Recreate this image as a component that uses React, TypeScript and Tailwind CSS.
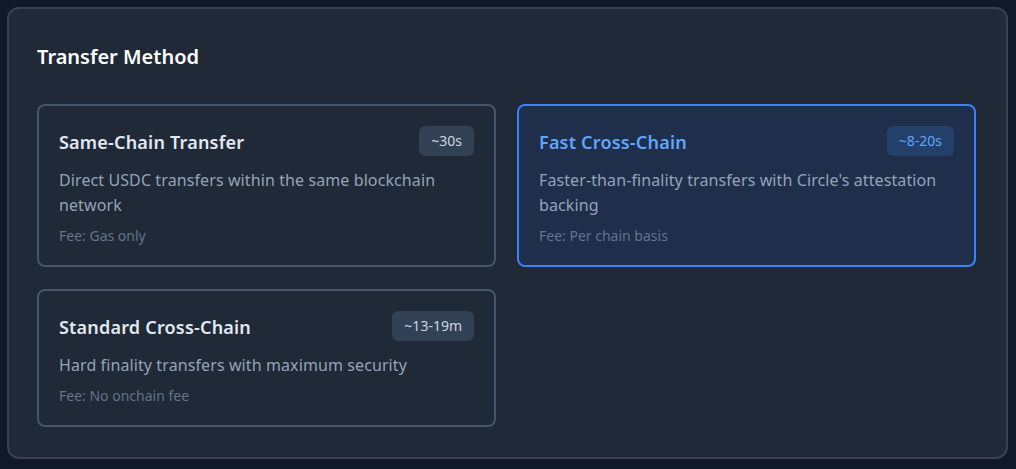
import React from "react";

type Method = {
  title: string;
  time: string;
  desc: string;
  fee: string;
  selected?: boolean;
};

const methods: Method[] = [
  {
    title: "Same-Chain Transfer",
    time: "~30s",
    desc: "Direct USDC transfers within the same blockchain network",
    fee: "Fee: Gas only",
  },
  {
    title: "Fast Cross-Chain",
    time: "~8-20s",
    desc: "Faster-than-finality transfers with Circle's attestation backing",
    fee: "Fee: Per chain basis",
    selected: true,
  },
  {
    title: "Standard Cross-Chain",
    time: "~13-19m",
    desc: "Hard finality transfers with maximum security",
    fee: "Fee: No onchain fee",
  },
];

function Card({ m }: { m: Method }) {
  return (
    <div
      className={
        m.selected
          ? "rounded-lg border-2 border-[#3b82f6] bg-[#1f2e4b] p-5"
          : "rounded-lg border-2 border-[#475569] bg-[#1f2937] p-5"
      }
    >
      <div className="mb-3 flex items-center justify-between">
        <div
          className={
            m.selected
              ? "pt-[2px] text-[18px] font-semibold tracking-[0.2px] text-[#60a5fa]"
              : "pt-[2px] text-[18px] font-semibold tracking-[0.2px] text-[#e2e8f0]"
          }
        >
          {m.title}
        </div>
        <div
          className={
            m.selected
              ? "rounded-md bg-[#23406b] px-3 py-[5px] text-sm leading-5 text-[#60a5fa]"
              : "rounded-md bg-[#334155] px-3 py-[5px] text-sm leading-5 text-[#cbd5e1]"
          }
        >
          {m.time}
        </div>
      </div>
      <p className="mb-[9px] text-base leading-[25px] tracking-[0.1px] text-[#94a3b8]">
        {m.desc}
      </p>
      <p className="text-sm leading-[18px] text-[#64748b]">{m.fee}</p>
    </div>
  );
}

export default function App() {
  return (
    <div
      className="min-h-[469px] w-full bg-[#111827] pl-[7px] pt-[7px]"
      style={{ fontFamily: '"Noto Sans", "Open Sans", sans-serif' }}
    >
      <div className="w-[1001px] rounded-xl border-2 border-[#374151] bg-[#1f2937] pb-[30px] pl-[28px] pr-[30px] pt-[34px]">
        <h2 className="mb-[33px] text-xl font-semibold leading-7 text-white">
          Transfer Method
        </h2>
        <div className="grid grid-cols-2 items-start gap-x-[21px] gap-y-[22px]">
          {methods.map((m) => (
            <Card key={m.title} m={m} />
          ))}
        </div>
      </div>
    </div>
  );
}
